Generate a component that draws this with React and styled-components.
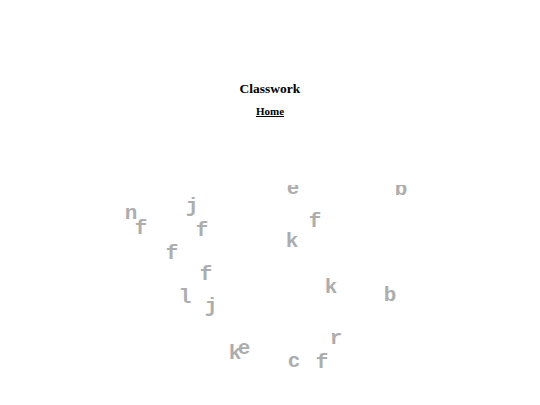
import React from "react";
import styled, { createGlobalStyle } from "styled-components";

const GlobalStyle = createGlobalStyle`
  html, body {
    margin: 0;
    padding: 0;
    background: #ffffff;
  }
  body {
    font-family: "Liberation Serif", "Times New Roman", serif;
    color: #000;
  }
`;

// letters scattered on the board: [char, centerX, centerY] in page px
const letters = [
  ["e", 293, 189],
  ["b", 401, 190],
  ["j", 192, 207],
  ["n", 131, 214],
  ["f", 141, 229],
  ["f", 202, 231],
  ["f", 315, 222],
  ["k", 292, 242],
  ["f", 172, 254],
  ["f", 206, 275],
  ["k", 331, 288],
  ["b", 390, 296],
  ["l", 185, 298],
  ["j", 211, 307],
  ["r", 336, 339],
  ["k", 235, 354],
  ["e", 244, 349],
  ["c", 294, 362],
  ["f", 322, 363],
];

const BOARD_TOP = 185;

const Page = styled.div`
  width: 540px;
  height: 405px;
  display: flex;
  flex-direction: column;
  align-items: center;
  overflow: hidden;
`;

const Header = styled.header`
  display: flex;
  flex-direction: column;
  align-items: center;
  padding-top: 81px;
  gap: 8px;
`;

const Title = styled.h1`
  margin: 0;
  font-size: 13.5px;
  line-height: 16px;
  font-weight: bold;
`;

const HomeLink = styled.a`
  font-size: 11px;
  line-height: 12px;
  font-weight: bold;
  color: #000;
  text-decoration: underline;
`;

const Board = styled.div`
  position: relative;
  margin-top: ${BOARD_TOP - 81 - 16 - 8 - 12}px;
  width: 100%;
  flex: 1;
  overflow: hidden;
`;

const Letter = styled.span`
  position: absolute;
  width: 22px;
  margin-left: -11px;
  text-align: center;
  font-family: "Courier New", Courier, "Liberation Mono", monospace;
  font-weight: bold;
  font-size: 21px;
  line-height: 22px;
  color: #adadad;
`;

export default function App() {
  return (
    <Page>
      <GlobalStyle />
      <Header>
        <Title>Classwork</Title>
        <HomeLink href="#">Home</HomeLink>
      </Header>
      <Board>
        {letters.map(([ch, x, y], i) => (
          <Letter key={i} style={{ left: x, top: y - BOARD_TOP - 11 }}>
            {ch}
          </Letter>
        ))}
      </Board>
    </Page>
  );
}
